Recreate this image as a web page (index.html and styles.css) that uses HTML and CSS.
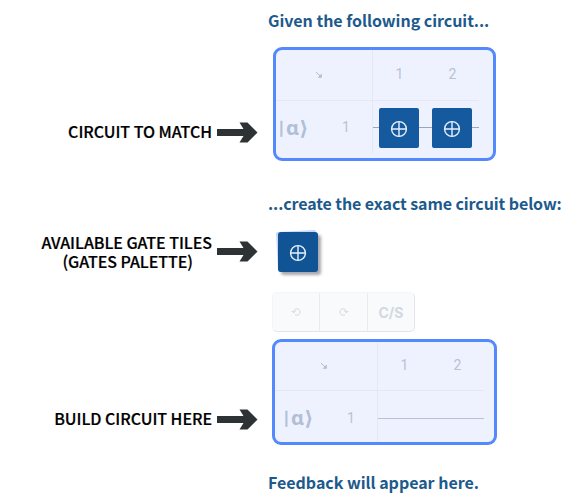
FILE: index.html
```html
<!DOCTYPE html>
<html lang="en">
<head>
<meta charset="utf-8">
<title>Circuit exercise</title>
<link rel="stylesheet" href="styles.css">
</head>
<body>
<svg class="defs" aria-hidden="true">
  <symbol id="arrow" viewBox="0 0 41 21"><path d="M0 7H26.5L22.5 .5H30.5L40.5 10.5L30.5 20.5H22.5L26.5 14H0Z"/></symbol>
  <symbol id="plus" viewBox="0 0 18 18"><circle cx="9" cy="9" r="7.4"/><path d="M9 1.6V16.4M1.6 9H16.4"/></symbol>
  <symbol id="corner" viewBox="0 0 8 8"><path d="M1 1.2L5.5 5.2"/><path class="solid" d="M6.8 2.6V6.8H2.6Z"/></symbol>
  <symbol id="undo" viewBox="0 0 10 8"><path d="M2.7 4.2A3.2 3.2 0 1 1 4 6.6"/><path d="M.6 3L2.7 4.6L4.8 3"/></symbol>
</svg>
<main class="page">
  <h2 class="title title-given">Given the following circuit...</h2>

  <section class="row row-match">
    <div class="label">CIRCUIT TO MATCH</div>
    <svg class="arrow"><use href="#arrow"/></svg>
    <div class="panel panel-match">
      <div class="cell corner"><svg><use href="#corner"/></svg></div>
      <div class="cell head"><span>1</span><span>2</span></div>
      <div class="cell qubit"><span class="ket"><i>|</i><b>α</b><em>⟩</em></span><span class="num">1</span></div>
      <div class="cell wire">
        <div class="tile"><svg><use href="#plus"/></svg></div>
        <div class="tile"><svg><use href="#plus"/></svg></div>
      </div>
    </div>
  </section>

  <h2 class="title title-create">...create the exact same circuit below:</h2>

  <section class="row row-tiles">
    <div class="label"><div>AVAILABLE GATE TILES</div><div class="sub">(GATES PALETTE)</div></div>
    <svg class="arrow"><use href="#arrow"/></svg>
    <div class="stack"><div class="tile"><svg><use href="#plus"/></svg></div></div>
  </section>

  <div class="toolbar">
    <div class="tool"><svg><use href="#undo"/></svg></div>
    <div class="tool"><svg class="redo"><use href="#undo"/></svg></div>
    <div class="tool">C/S</div>
  </div>

  <section class="row row-build">
    <div class="label">BUILD CIRCUIT HERE</div>
    <svg class="arrow"><use href="#arrow"/></svg>
    <div class="panel panel-build">
      <div class="cell corner"><svg><use href="#corner"/></svg></div>
      <div class="cell head"><span>1</span><span>2</span></div>
      <div class="cell qubit"><span class="ket"><i>|</i><b>α</b><em>⟩</em></span><span class="num">1</span></div>
      <div class="cell wire"></div>
    </div>
  </section>

  <h2 class="title title-feedback">Feedback will appear here.</h2>
</main>
</body>
</html>
```
FILE: styles.css
```css
* { box-sizing: border-box; }
body {
  margin: 0;
  background: #fff;
  font-family: "Noto Sans CJK SC", "Noto Sans", sans-serif;
}
.defs { position: absolute; width: 0; height: 0; }
svg { display: block; }
.page { width: 564px; height: 500px; overflow: hidden; display: flex; flex-direction: column; }
.title {
  margin: 0 0 0 268px;
  height: 24px;
  font-size: 16px;
  line-height: 24px;
  font-weight: 700;
  letter-spacing: -.03px;
  color: #1d5a8c;
  white-space: nowrap;
}
.title-given { margin-top: 8px; }
.title-create { margin-top: 30px; letter-spacing: -.09px; }
.title-feedback { margin-top: 25px; }

.row { display: grid; grid-template-columns: 212px 41px auto; column-gap: 5px; align-items: start; }
.label {
  text-align: right;
  font-size: 16px;
  line-height: 19px;
  font-weight: 500;
  letter-spacing: -.04px;
  color: #000;
  white-space: nowrap;
  -webkit-text-stroke: .2px #000;
}
.sub { margin-right: 19px; }
.arrow { width: 41px; height: 21px; fill: #2d3235; }
.row-match { margin-top: 15px; height: 114px; }
.row-match .label { margin-top: 75px; }
.row-match .arrow { margin-top: 75px; }
.row-tiles { margin-top: 17px; height: 60px; }
.row-tiles .label { margin-top: 1px; }
.row-tiles .arrow { margin-top: 9px; }
.row-build { margin-top: 7px; height: 106px; }
.row-build .label { margin-top: 70px; }
.row-build .arrow { margin-top: 70px; }

.panel {
  display: grid;
  border: 3px solid #5488fd;
  border-radius: 9px;
  background: #eef2ff;
  color: #b7c2d3;
  font-family: Roboto, sans-serif;
}
.panel-match {
  width: 223px;
  height: 114px;
  margin-left: 10px;
  grid-template: 51px 53px / 97px 106px;
}
.panel-build {
  width: 225px;
  height: 106px;
  margin-left: 9px;
  grid-template: 49px 51px / 103px 106px;
}
.cell { display: flex; align-items: center; border: 0 solid #e3e8f3; }
.corner { border-width: 0 1px 1px 0; padding-left: 39px; }
.panel-build .corner { padding-left: 45px; }
.corner svg { width: 8px; height: 8px; stroke: #b1bccd; fill: none; }
.solid { fill: #b1bccd; stroke: none; }
.head { border-bottom-width: 1px; font-size: 14px; padding-bottom: 2px; }
.panel-build .head { padding-bottom: 3px; }
.head span { width: 53px; text-align: center; }
.qubit { border-right-width: 1px; }
.ket { display: flex; align-items: center; width: 36px; height: 24px; margin-left: 3px; color: #b1bfd5; }
.panel-build .ket { margin-left: 9px; }
.ket i { width: 5px; font: 400 19px/24px Roboto, sans-serif; -webkit-text-stroke: .5px #b1bfd5; }
.ket b { font: 700 20px/24px "Noto Sans", sans-serif; margin-left: 2px; }
.ket em { font: 700 20px/24px "DejaVu Sans", sans-serif; }
.num { font-size: 14px; margin: 0 0 2px 27px; }
.panel-build .num { margin-bottom: 0; }
.panel-build .qubit { padding-top: 2px; }
.wire {
  gap: 13px;
  padding-left: 6px;
  background: linear-gradient(#98a6bf, #98a6bf) 0 26px / 100% 1px no-repeat;
}
.panel-build .wire { background: linear-gradient(#b8c2d5, #b8c2d5) 0 27px / 100% 1px no-repeat; }
.tile {
  width: 40px;
  height: 40px;
  border-radius: 2px;
  background: #155a9f;
  display: grid;
  place-items: center;
}
.tile svg { width: 18px; height: 18px; fill: none; stroke: #e8f0fa; stroke-width: 1.4; margin-top: 2px; }
.stack {
  width: 45px;
  height: 43px;
  margin-left: 12px;
  padding: 0 0 0 3px;
  position: relative;
}
.stack::before {
  content: "";
  position: absolute;
  left: 2px;
  top: -1px;
  width: 40px;
  height: 40px;
  border-radius: 2px;
  background: #c5d8fa;
  transform: rotate(-3deg);
}
.stack .tile { position: relative; border-radius: 3px; background: #105495; box-shadow: 3px 3px 3px rgba(60, 60, 75, .45); }

.toolbar {
  display: grid;
  grid-template-columns: 46px 48px 47px;
  width: 143px;
  height: 40px;
  margin: 0 0 0 272px;
  border: 1px solid #f3f5f8;
  border-right-color: #e1e6ec;
  border-bottom-color: #e1e6ec;
  border-radius: 5px;
  background: #f9fafc;
}
.tool {
  display: grid;
  place-items: center;
  color: #d2d8df;
  font: 700 14px Inter, sans-serif;
}
.tool + .tool { border-left: 1px solid #e8ebef; }
.tool svg { width: 10px; height: 8px; fill: none; stroke: #cdd3db; stroke-width: .9; }
.tool .redo { transform: scaleX(-1); }
```
